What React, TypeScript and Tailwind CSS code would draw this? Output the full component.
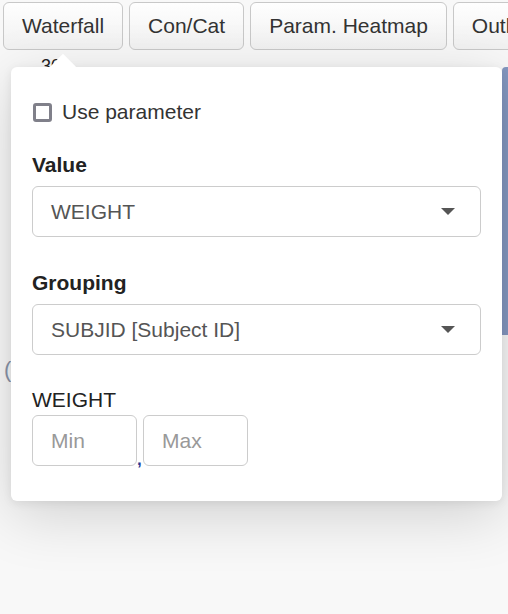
import { useState } from 'react'

const TABS = ['Waterfall', 'Con/Cat', 'Param. Heatmap', 'Outliers']

function Caret() {
  return (
    <svg width="14" height="8" viewBox="0 0 14 8" className="shrink-0">
      <path d="M0 0 H14 L7 7 Z" fill="#555" />
    </svg>
  )
}

function SelectBox({ value }: { value: string }) {
  return (
    <div className="flex h-[51px] items-center justify-between rounded-[6px] border border-[#ccc] bg-white pl-[18px] pr-[25px] text-[#555]">
      <span>{value}</span>
      <Caret />
    </div>
  )
}

export default function App() {
  const [useParam, setUseParam] = useState(false)

  return (
    <div
      className="relative h-[614px] w-[508px] overflow-hidden bg-[#f8f8f8] text-[21px] text-[#333]"
      style={{ fontFamily: '"Liberation Sans", Arial, sans-serif' }}
    >
      {/* page behind the popover */}
      <div className="flex gap-[6px] pl-[3px] pt-[2px]">
        {TABS.map((t) => (
          <button
            key={t}
            className="h-[48px] shrink-0 whitespace-nowrap rounded-[6px] border border-[#c8c8c8] bg-gradient-to-b from-[#fefefe] to-[#f1f1f1] px-[18px] text-[#333]"
          >
            {t}
          </button>
        ))}
      </div>
      <div className="pl-[41px] pt-[7px] text-[18px] leading-none text-[#222]">30</div>
      <div className="absolute right-0 top-[67px] h-[268px] w-[6px] rounded-tl-[4px] bg-[#8598c1]" />
      <div className="absolute left-[4px] top-[353px] text-[22px] text-[#8a94a8]">(</div>

      {/* popover */}
      <div className="absolute left-[11px] top-[67px] w-[491px] rounded-[6px] bg-white px-[21px] pb-[35px] pt-[30px] shadow-[0_14px_60px_rgba(0,0,0,0.16),0_2px_10px_rgba(0,0,0,0.08)]">
        <div className="absolute -top-[9px] left-[42px] h-[20px] w-[20px] rotate-45 bg-white" />

        <label className="relative flex h-[30px] items-center gap-[10px]">
          <input
            type="checkbox"
            checked={useParam}
            onChange={(e) => setUseParam(e.target.checked)}
            className="ml-[1px] h-[19px] w-[19px] appearance-none rounded-[3px] border-[3px] border-[#80808a] bg-white"
          />
          <span>Use parameter</span>
        </label>

        <div className="mt-[23px] flex flex-col gap-[6px]">
          <span className="h-[30px] font-bold leading-[30px] text-[#222]">Value</span>
          <SelectBox value="WEIGHT" />
        </div>

        <div className="mt-[31px] flex flex-col gap-[6px]">
          <span className="h-[30px] font-bold leading-[30px] text-[#222]">Grouping</span>
          <SelectBox value="SUBJID [Subject ID]" />
        </div>

        <div className="mt-[30px]">
          <div className="h-[30px] leading-[30px] text-[#222]">WEIGHT</div>
          <div className="flex items-end">
            <input
              placeholder="Min"
              className="h-[51px] w-[105px] rounded-[6px] border border-[#ccc] px-[18px] text-[21px] text-[#555] placeholder:text-[#999]"
            />
            <span className="mb-[-2px] w-[6px] text-[17px] font-bold leading-none text-[#1f3a93]">,</span>
            <input
              placeholder="Max"
              className="h-[51px] w-[105px] rounded-[6px] border border-[#ccc] px-[18px] text-[21px] text-[#555] placeholder:text-[#999]"
            />
          </div>
        </div>
      </div>
    </div>
  )
}
